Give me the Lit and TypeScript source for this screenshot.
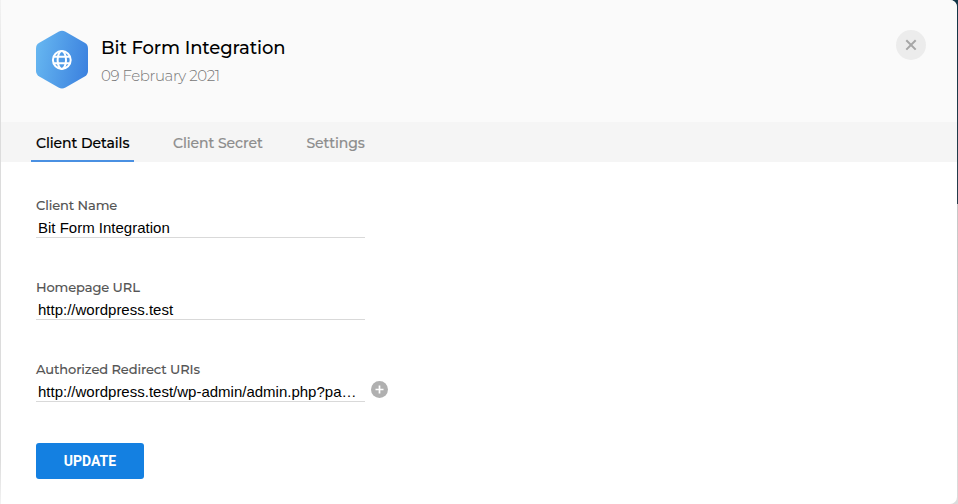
import { LitElement, html, css, svg } from "lit";
import { customElement, state } from "lit/decorators.js";

interface Field {
  label: string;
  value: string;
  kind: string;
  extendable?: boolean;
}

const globe = svg`
  <g transform="translate(16 20.5)" fill="none" stroke="#fff" stroke-width="2">
    <circle cx="9.8" cy="9.5" r="8.9"></circle>
    <ellipse cx="9.8" cy="9.5" rx="4.2" ry="8.9"></ellipse>
    <path d="M1.9 6.3H17.7M1.9 12.7H17.7"></path>
  </g>`;

@customElement("app-root")
export class AppRoot extends LitElement {
  @state() private active = 0;

  private tabs = [
    { name: "Client Details", kind: "details" },
    { name: "Client Secret", kind: "secret" },
    { name: "Settings", kind: "settings" },
  ];

  private fields: Field[] = [
    { label: "Client Name", value: "Bit Form Integration", kind: "name" },
    { label: "Homepage URL", value: "http://wordpress.test", kind: "home" },
    {
      label: "Authorized Redirect URIs",
      value: "http://wordpress.test/wp-admin/admin.php?page=bitform",
      kind: "uris",
      extendable: true,
    },
  ];

  static styles = css`
    :host {
      display: block;
      height: 504px;
      box-sizing: border-box;
      padding: 0 1px;
      overflow: hidden;
      background:
        linear-gradient(#123547, #263e4c 204px, #c6c6c6 204px, #dcdcdc) right / 10px 100% no-repeat,
        linear-gradient(#f2f2f2, #dcdcdc 100px, #dcdcdc 460px, #f2f2f2);
      font-family: Montserrat, Inter, sans-serif;
    }
    .panel {
      height: 504px;
      background: #fff;
      border-radius: 0 7px 7px 0;
      overflow: hidden;
    }
    header {
      box-sizing: border-box;
      height: 122px;
      padding: 30px 31px 0 35px;
      display: flex;
      align-items: flex-start;
      background: #fafafa;
    }
    .logo { display: block; width: 52px; height: 59px; }
    .heading { flex: 1; padding: 6px 0 0 13px; white-space: nowrap; }
    h1 {
      margin: 0;
      font-size: 18px;
      line-height: 24px;
      font-weight: 500;
      color: #000;
      letter-spacing: -0.1px;
    }
    .date {
      margin-top: 5px;
      font-size: 15px;
      line-height: 22px;
      font-weight: 300;
      color: #777;
      letter-spacing: -0.42px;
    }
    .close {
      width: 30px;
      height: 30px;
      padding: 0;
      border: 0;
      border-radius: 50%;
      background: #ececec;
    }
    .close svg { display: block; }
    nav {
      height: 40px;
      padding-left: 30px;
      display: flex;
      gap: 34px;
      background: #f5f5f5;
    }
    .tab {
      box-sizing: border-box;
      height: 40px;
      padding: 3px 5px 0;
      border: 0;
      border-bottom: 2px solid transparent;
      background: none;
      font: 500 14px/20px Montserrat, Inter, sans-serif;
      letter-spacing: -0.07px;
      color: #8d8d8d;
      -webkit-text-stroke: 0.15px currentColor;
      text-align: left;
      white-space: nowrap;
    }
    .details { width: 103px; }
    .secret { width: 99px; }
    .settings { width: 69px; padding-left: 5.5px; }
    .on { color: #000; border-bottom-color: #4a90e2; }
    form { padding: 33px 0 0 35px; }
    .field { height: 82px; }
    label {
      display: block;
      height: 21px;
      font-size: 13px;
      line-height: 20px;
      font-weight: 500;
      letter-spacing: -0.1px;
      color: #555;
      -webkit-text-stroke: 0.1px currentColor;
      white-space: nowrap;
    }
    .row { display: flex; align-items: center; gap: 6px; height: 22px; }
    input {
      box-sizing: border-box;
      width: 329px;
      height: 22px;
      padding: 1px 2px 0 2px;
      border: 0;
      border-bottom: 1px solid #d9d9d9;
      background: transparent;
      outline: none;
      font: 15px/20px "Liberation Sans", Arial, sans-serif;
      color: #000;
      text-overflow: ellipsis;
    }
    .add {
      width: 17px;
      height: 17px;
      padding: 0;
      border: 0;
      background: none;
      margin-top: -3px;
    }
    .add svg { display: block; }
    .update {
      display: block;
      width: 108px;
      height: 36px;
      margin-top: 2px;
      padding: 0;
      border: 0;
      border-radius: 3px;
      background: #1480e1;
      color: #fff;
      font: 700 14px/36px Roboto, sans-serif;
    }
  `;

  render() {
    return html`
      <main class="panel">
        <header>
          <svg class="logo" viewBox="0 0 52 59">
            <defs>
              <linearGradient id="blue" x1="0" y1="0.4" x2="1" y2="0.6">
                <stop offset="0" stop-color="#65b5f0"></stop>
                <stop offset="1" stop-color="#3c82df"></stop>
              </linearGradient>
            </defs>
            <path
              fill="url(#blue)"
              d="M22.5 1.7Q26 -0.2 29.5 1.7L48.7 12.7Q52 14.6 52 18.4V40.8Q52 44.6 48.7 46.5L29.5 57.5Q26 59.4 22.5 57.5L3.3 46.5Q0 44.6 0 40.8V18.4Q0 14.6 3.3 12.7Z"
            ></path>
            ${globe}
          </svg>
          <div class="heading">
            <h1>Bit Form Integration</h1>
            <div class="date">09 February 2021</div>
          </div>
          <button class="close" aria-label="Close">
            <svg width="30" height="30" fill="none" stroke="#a6a6a6" stroke-width="2">
              <path d="M10.3 10.2L19.7 19.6M19.7 10.2L10.3 19.6"></path>
            </svg>
          </button>
        </header>
        <nav>
          ${this.tabs.map(
            (t, i) => html`<button
              class="tab ${t.kind} ${i === this.active ? "on" : ""}"
              @click=${() => (this.active = i)}
            >${t.name}</button>`
          )}
        </nav>
        <form @submit=${(e: Event) => e.preventDefault()}>
          ${this.fields.map(
            (f) => html`<div class="field">
              <label for=${f.kind}>${f.label}</label>
              <div class="row">
                <input id=${f.kind} .value=${f.value} spellcheck="false" />
                ${f.extendable
                  ? html`<button class="add" type="button" aria-label="Add">
                      <svg width="17" height="17">
                        <circle cx="8.5" cy="8.5" r="8.5" fill="#b0b0b0"></circle>
                        <path d="M8.5 4.5V12.5M4.5 8.5H12.5" stroke="#fff" stroke-width="1.7"></path>
                      </svg>
                    </button>`
                  : ""}
              </div>
            </div>`
          )}
          <button class="update">UPDATE</button>
        </form>
      </main>
    `;
  }
}
